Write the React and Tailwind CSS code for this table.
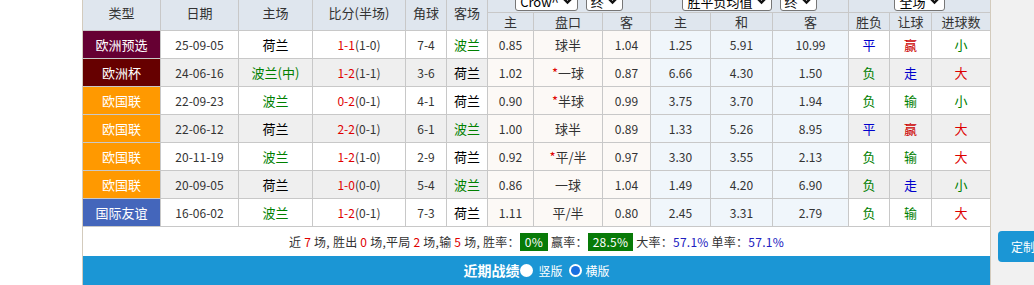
import React from "react";

const typeColors = {
  欧洲预选: "bg-[#660033]",
  欧洲杯: "bg-[#660000]",
  欧国联: "bg-[#ff9900]",
  国际友谊: "bg-[#4466bb]",
};

const resultColors = {
  平: "text-[#0000cc]",
  走: "text-[#0000cc]",
  负: "text-[#008000]",
  输: "text-[#008000]",
  小: "text-[#008000]",
  赢: "text-[#cc0000]",
  胜: "text-[#cc0000]",
  大: "text-[#dd0000]",
};

const matches = [
  { type: "欧洲预选", date: "25-09-05", home: "荷兰", score: "1-1", half: "(1-0)", corner: "7-4", away: "波兰", h1: "0.85", pan: "球半", star: false, h2: "1.04", o1: "1.25", o2: "5.91", o3: "10.99", r1: "平", r2: "赢", r3: "小" },
  { type: "欧洲杯", date: "24-06-16", home: "波兰(中)", score: "1-2", half: "(1-1)", corner: "3-6", away: "荷兰", h1: "1.02", pan: "一球", star: true, h2: "0.87", o1: "6.66", o2: "4.30", o3: "1.50", r1: "负", r2: "走", r3: "大" },
  { type: "欧国联", date: "22-09-23", home: "波兰", score: "0-2", half: "(0-1)", corner: "4-1", away: "荷兰", h1: "0.90", pan: "半球", star: true, h2: "0.99", o1: "3.75", o2: "3.70", o3: "1.94", r1: "负", r2: "输", r3: "小" },
  { type: "欧国联", date: "22-06-12", home: "荷兰", score: "2-2", half: "(0-1)", corner: "6-1", away: "波兰", h1: "1.00", pan: "球半", star: false, h2: "0.89", o1: "1.33", o2: "5.26", o3: "8.95", r1: "平", r2: "赢", r3: "大" },
  { type: "欧国联", date: "20-11-19", home: "波兰", score: "1-2", half: "(1-0)", corner: "2-9", away: "荷兰", h1: "0.92", pan: "平/半", star: true, h2: "0.97", o1: "3.30", o2: "3.55", o3: "2.13", r1: "负", r2: "输", r3: "大" },
  { type: "欧国联", date: "20-09-05", home: "荷兰", score: "1-0", half: "(0-0)", corner: "5-4", away: "波兰", h1: "0.86", pan: "一球", star: false, h2: "1.04", o1: "1.49", o2: "4.20", o3: "6.90", r1: "负", r2: "走", r3: "小" },
  { type: "国际友谊", date: "16-06-02", home: "波兰", score: "1-2", half: "(0-1)", corner: "7-3", away: "荷兰", h1: "1.11", pan: "平/半", star: false, h2: "0.80", o1: "2.45", o2: "3.31", o3: "2.79", r1: "负", r2: "输", r3: "大" },
];

const Chevron = () => (
  <svg width="11" height="8" viewBox="0 0 11 8" className="ml-[3px]">
    <path d="M1.5 1.5 L5.5 5.5 L9.5 1.5" fill="none" stroke="#111" strokeWidth="2.4" />
  </svg>
);

const FakeSelect = ({ label }) => (
  <div className="flex items-center h-[20px] px-[4px] bg-white border border-[#767676] rounded-[3px] text-[13px] text-black leading-none">
    {label}
    <Chevron />
  </div>
);

const teamColor = (name) => (name.startsWith("波兰") ? "text-[#008000]" : "text-black");

const App = () => {
  return (
    <div
      className="flex w-[1034px] h-[285px] overflow-hidden bg-white text-[12px] text-[#333]"
      style={{ fontFamily: '"Noto Sans CJK SC", "Microsoft YaHei", sans-serif' }}
    >
      <div className="w-[82px] shrink-0 bg-white" />

      <div className="w-[909px] shrink-0 flex flex-col border-x border-[#d3cbbd]">
        <div className="-mt-[10px] grid grid-cols-[77px_77px_73px_92px_40px_40px_45px_68px_47px_59px_61px_75px_40px_41px_58px] grid-rows-[22px_17px_repeat(7,27px)] gap-px pb-px bg-[#c8c8c8]">
          {["类型", "日期", "主场", "比分(半场)", "角球", "客场"].map((h) => (
            <div key={h} className="row-span-2 flex items-center justify-center pt-[6px] bg-[#dfe6ee] text-[13px] text-[#333]">
              {h}
            </div>
          ))}
          <div className="col-span-3 flex items-end justify-center gap-[8px] pb-px bg-[#dfe6ee]">
            <FakeSelect label="Crow^" />
            <FakeSelect label="终" />
          </div>
          <div className="col-span-3 flex items-end justify-center gap-[8px] pb-px bg-[#dfe6ee]">
            <FakeSelect label="胜平负均值" />
            <FakeSelect label="终" />
          </div>
          <div className="col-span-3 flex items-end justify-center pb-px bg-[#dfe6ee]">
            <FakeSelect label="全场" />
          </div>
          {["主", "盘口", "客", "主", "和", "客", "胜负", "让球", "进球数"].map((h, i) => (
            <div key={i} className="flex items-center justify-center bg-[#dfe6ee] text-[13px] text-[#333]">
              {h}
            </div>
          ))}

          {matches.map((m, i) => {
            const rowBg = i % 2 === 1 ? "bg-[#efefef]" : "bg-white";
            const cell = `flex items-center justify-center ${rowBg}`;
            const oddCell = "flex items-center justify-center bg-[#fcf9f6]";
            const euroCell = "flex items-center justify-center bg-[#f0f6fb]";
            return (
              <React.Fragment key={i}>
                <div className={`flex items-center justify-center text-white text-[13px] ${typeColors[m.type]}`}>{m.type}</div>
                <div className={cell}>{m.date}</div>
                <div className={`${cell} text-[13px] ${teamColor(m.home)}`}>{m.home}</div>
                <div className={cell}>
                  <span className="text-[#e00000]">{m.score}</span>
                  <span>{m.half}</span>
                </div>
                <div className={cell}>{m.corner}</div>
                <div className={`${cell} text-[13px] ${teamColor(m.away)}`}>{m.away}</div>
                <div className={oddCell}>{m.h1}</div>
                <div className={`${oddCell} text-[13px]`}>
                  {m.star && <span className="text-[#e00000]">*</span>}
                  {m.pan}
                </div>
                <div className={oddCell}>{m.h2}</div>
                <div className={euroCell}>{m.o1}</div>
                <div className={euroCell}>{m.o2}</div>
                <div className={euroCell}>{m.o3}</div>
                <div className={`${cell} text-[13px] ${resultColors[m.r1]}`}>{m.r1}</div>
                <div className={`${cell} text-[13px] ${resultColors[m.r2]}`}>{m.r2}</div>
                <div className={`${cell} text-[13px] ${resultColors[m.r3]}`}>{m.r3}</div>
              </React.Fragment>
            );
          })}
        </div>

        <div className="h-[29px] flex items-center justify-center bg-white text-[12px] tracking-[0.25px] text-[#333] whitespace-pre">
          <span>近 </span>
          <span className="text-[#e00000]">7</span>
          <span> 场, 胜出 </span>
          <span className="text-[#e00000]">0</span>
          <span> 场,平局 </span>
          <span className="text-[#e00000]">2</span>
          <span> 场,输 </span>
          <span className="text-[#e00000]">5</span>
          <span> 场, 胜率：</span>
          <span className="h-[18px] px-[5px] flex items-center bg-[#087a08] text-white">0%</span>
          <span> 赢率：</span>
          <span className="h-[18px] px-[5px] flex items-center bg-[#087a08] text-white">28.5%</span>
          <span> 大率：</span>
          <span className="text-[#2020c0]">57.1%</span>
          <span> 单率：</span>
          <span className="text-[#2020c0]">57.1%</span>
        </div>

        <div className="h-[29px] flex items-center justify-center bg-[#1b96d5] text-white">
          <span className="text-[14px] font-bold">近期战绩</span>
          <span className="w-[13px] h-[13px] rounded-full bg-white ml-[1px]" />
          <span className="ml-[5px] text-[12px]">竖版</span>
          <span className="ml-[6px] w-[13px] h-[13px] rounded-full bg-white flex items-center justify-center">
            <span className="w-[9px] h-[9px] rounded-full bg-[#1a6fe0]" />
          </span>
          <span className="ml-[4px] text-[12px]">横版</span>
        </div>
      </div>

      <div className="flex-1 bg-[#f1f1f1] overflow-hidden">
        <div className="mt-[231px] ml-[7px] w-[60px] h-[31px] rounded-[4px] bg-[#1b96d5] flex items-center pl-[13px] text-white text-[12px]">
          定制
        </div>
      </div>
    </div>
  );
};

export default App;
